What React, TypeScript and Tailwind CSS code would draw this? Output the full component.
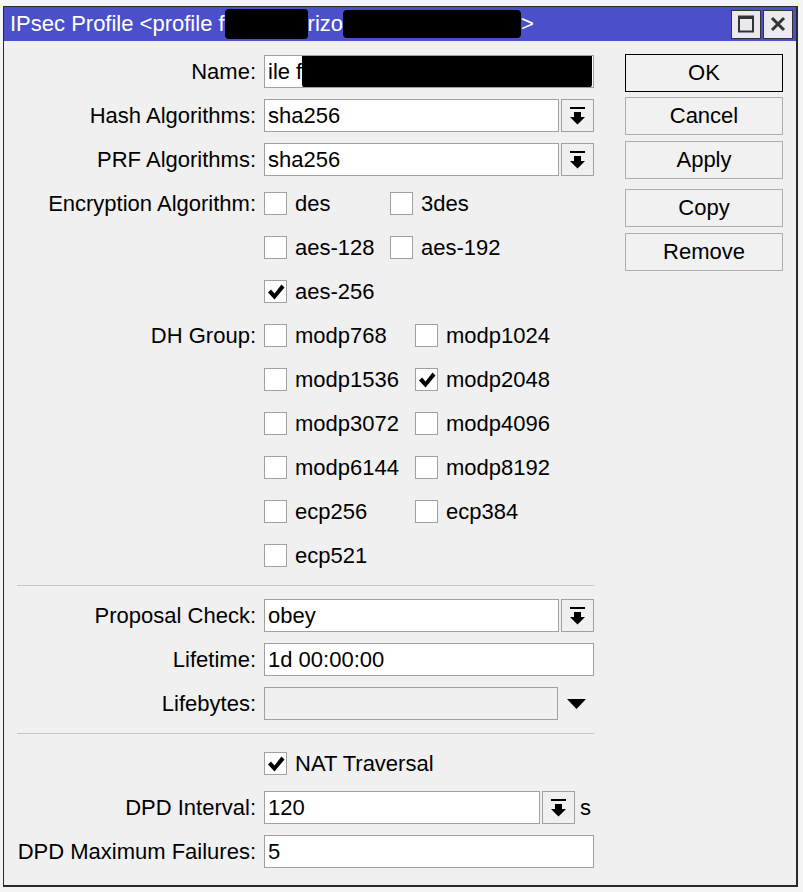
import React from "react";

const FONT = "font-['Liberation_Sans',Arial,sans-serif]";

function DropIcon() {
  return (
    <svg width="15" height="18" viewBox="0 0 15 18" aria-hidden>
      <rect x="0" y="0" width="15" height="2" fill="#000" />
      <path d="M4 5h7v5h4l-7.5 7.5L0 10h4z" fill="#000" />
    </svg>
  );
}

function Tick() {
  return (
    <svg width="18" height="18" viewBox="0 0 18 18" aria-hidden>
      <path d="M1 9.5l3-3 3.5 4L14.5 1.5 17.5 4.5 7.5 16.5z" fill="#000" />
    </svg>
  );
}

function Checkbox({ checked }: { checked?: boolean }) {
  return (
    <div className="flex h-[23px] w-[23px] shrink-0 items-center justify-center border border-[#a0a0a0] bg-white">
      {checked && <Tick />}
    </div>
  );
}

function Check({ label, checked }: { label: string; checked?: boolean }) {
  return (
    <div className="flex items-center">
      <Checkbox checked={checked} />
      <span className="ml-[8px]">{label}</span>
    </div>
  );
}

function Row({ label, children }: { label?: string; children: React.ReactNode }) {
  return (
    <div className="flex h-[33px] items-center">
      <div className="w-[239px] shrink-0 whitespace-nowrap text-right">{label}</div>
      <div className="ml-[8px] flex flex-1 items-center">{children}</div>
    </div>
  );
}

function Field({ value, className = "" }: { value?: React.ReactNode; className?: string }) {
  return (
    <div className={`flex h-[33px] items-center overflow-hidden border border-[#a0a0a0] bg-white pl-[3px] ${className}`}>
      {value}
    </div>
  );
}

function Dropdown({ value }: { value: string }) {
  return (
    <div className="flex flex-1 gap-[2px]">
      <Field value={value} className="flex-1" />
      <div className="flex h-[33px] w-[33px] items-center justify-center border border-[#a0a0a0] bg-[#f0f0f0]">
        <DropIcon />
      </div>
    </div>
  );
}

function CheckGrid({ label, col, items }: { label: string; col: string; items: [string, boolean][][] }) {
  return (
    <>
      {items.map((pair, i) => (
        <Row key={i} label={i === 0 ? label : undefined}>
          {pair.map(([name, on], j) => (
            <div key={name} className={j === 0 ? col : ""}>
              <Check label={name} checked={on} />
            </div>
          ))}
        </Row>
      ))}
    </>
  );
}

function Separator() {
  return <div className="my-[2px] h-px bg-[#c6c6c6]" />;
}

function Button({ label, primary, className = "" }: { label: string; primary?: boolean; className?: string }) {
  return (
    <div
      className={`flex h-[38px] items-center justify-center border bg-[#f1f1f1] ${
        primary ? "border-black" : "border-[#adadad]"
      } ${className}`}
    >
      {label}
    </div>
  );
}

export default function App() {
  return (
    <div className={`h-[892px] w-[803px] overflow-hidden bg-[#f4f4f4] pl-[3px] pt-[6px] text-[22px] leading-none text-black ${FONT}`}>
      <div className="flex h-[881px] w-[795px] flex-col border border-b-2 border-r-2 border-[#2a2a2a] bg-[#f0f0f0]">
        {/* title bar */}
        <div className="flex h-[34px] shrink-0 items-center bg-[#4b4fca] pl-[6px] pr-[3px] text-white">
          <span className="whitespace-nowrap">IPsec Profile &lt;profile f</span>
          <span className="inline-block h-[30px] w-[83px] rounded-sm bg-black" />
          <span className="whitespace-nowrap">rizo</span>
          <span className="inline-block h-[28px] w-[178px] rounded-sm bg-black" />
          <span>&gt;</span>
          <div className="ml-auto flex gap-[2px]">
            <div className="flex h-[29px] w-[30px] items-center justify-center border border-[#333] bg-[#ece9ee]">
              <svg width="16" height="18" viewBox="0 0 16 18" aria-hidden>
                <rect x="1" y="1.5" width="14" height="15" fill="none" stroke="#333" strokeWidth="2" />
                <rect x="1" y="1" width="14" height="3" fill="#333" />
              </svg>
            </div>
            <div className="flex h-[29px] w-[30px] items-center justify-center border border-[#333] bg-[#ece9ee]">
              <svg width="16" height="16" viewBox="0 0 16 16" aria-hidden>
                <path d="M2 2l12 12M14 2L2 14" stroke="#333" strokeWidth="3" />
              </svg>
            </div>
          </div>
        </div>

        {/* body */}
        <div className="flex pl-[13px] pt-[13px]">
          <div className="mt-px flex w-[577px] flex-col gap-[11px]">
            <Row label="Name:">
              <Field
                className="flex-1"
                value={
                  <>
                    <span className="whitespace-nowrap">ile f</span>
                    <div className="-mt-[3px] mr-[1px] h-[35px] flex-1 rounded-sm bg-black" />
                  </>
                }
              />
            </Row>
            <Row label="Hash Algorithms:">
              <Dropdown value="sha256" />
            </Row>
            <Row label="PRF Algorithms:">
              <Dropdown value="sha256" />
            </Row>
            <CheckGrid
              label="Encryption Algorithm:"
              col="w-[126px]"
              items={[
                [["des", false], ["3des", false]],
                [["aes-128", false], ["aes-192", false]],
                [["aes-256", true]],
              ]}
            />
            <CheckGrid
              label="DH Group:"
              col="w-[151px]"
              items={[
                [["modp768", false], ["modp1024", false]],
                [["modp1536", false], ["modp2048", true]],
                [["modp3072", false], ["modp4096", false]],
                [["modp6144", false], ["modp8192", false]],
                [["ecp256", false], ["ecp384", false]],
                [["ecp521", false]],
              ]}
            />
            <Separator />
            <Row label="Proposal Check:">
              <Dropdown value="obey" />
            </Row>
            <Row label="Lifetime:">
              <Field value="1d 00:00:00" className="flex-1" />
            </Row>
            <Row label="Lifebytes:">
              <div className="h-[33px] w-[294px] border border-[#a0a0a0] bg-[#f0f0f0]" />
              <svg className="ml-[9px]" width="19" height="10" viewBox="0 0 19 10" aria-hidden>
                <path d="M0 0h19L9.5 10z" fill="#000" />
              </svg>
            </Row>
            <Separator />
            <Row>
              <Check label="NAT Traversal" checked />
            </Row>
            <Row label="DPD Interval:">
              <Field value="120" className="w-[276px]" />
              <div className="ml-[2px] flex h-[33px] w-[33px] items-center justify-center border border-[#a0a0a0] bg-[#f0f0f0]">
                <DropIcon />
              </div>
              <span className="ml-[5px]">s</span>
            </Row>
            <Row label="DPD Maximum Failures:">
              <Field value="5" className="flex-1" />
            </Row>
          </div>

          <div className="ml-[31px] flex w-[158px] flex-col gap-[5px]">
            <Button label="OK" primary />
            <Button label="Cancel" />
            <Button label="Apply" className="mt-px" />
            <Button label="Copy" className="mt-[5px]" />
            <Button label="Remove" className="mt-px" />
          </div>
        </div>
      </div>
    </div>
  );
}
